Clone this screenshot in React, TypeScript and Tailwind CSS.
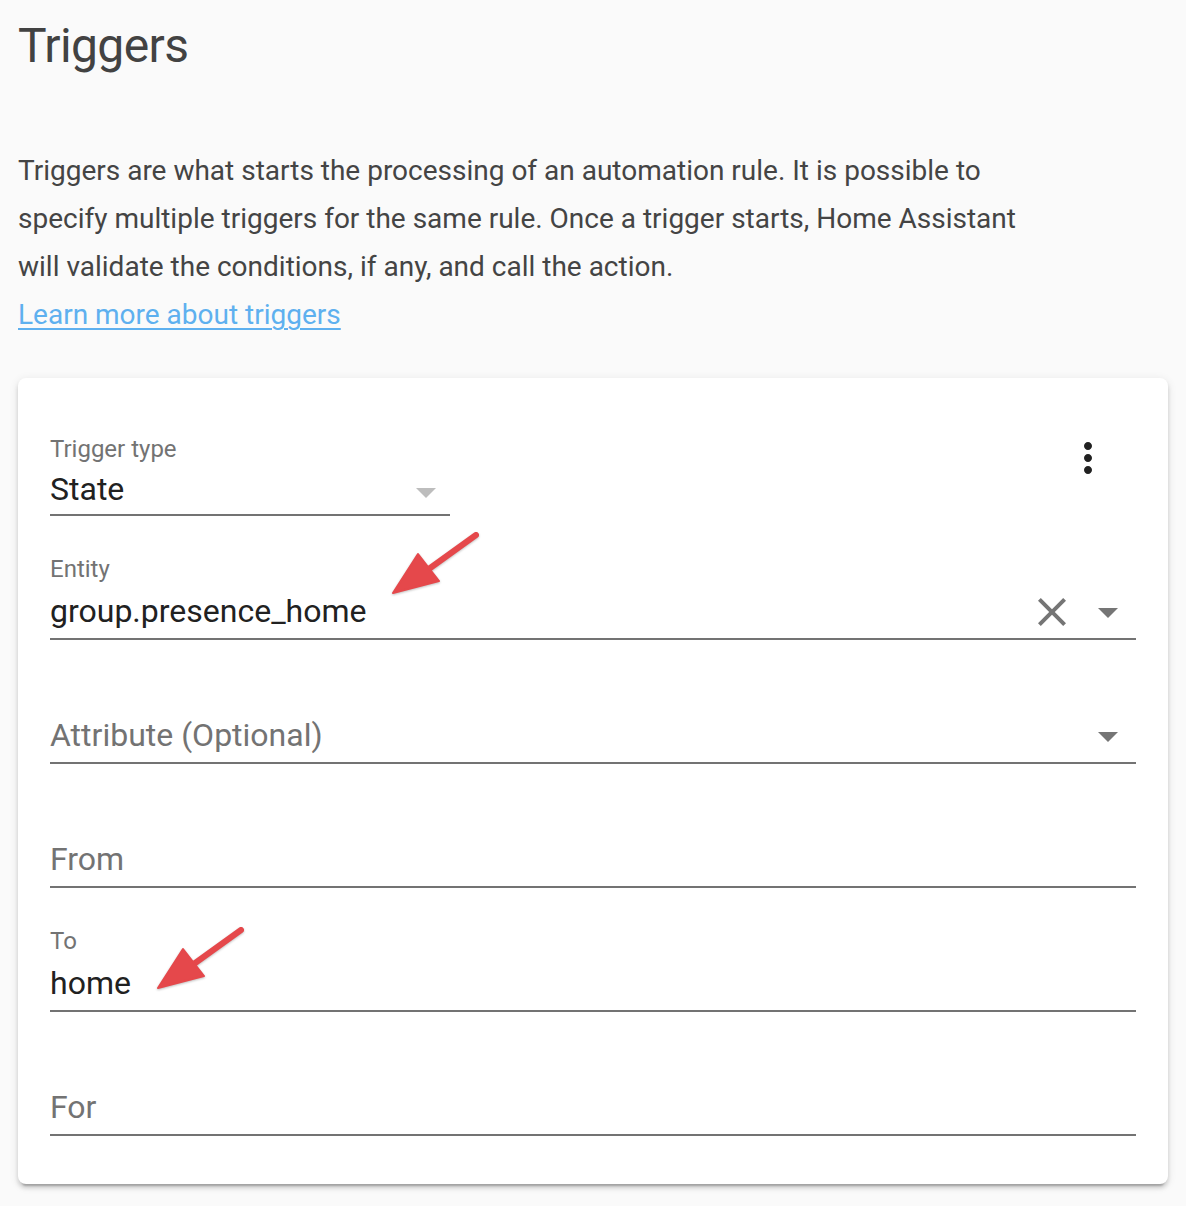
import type { ReactNode } from "react";

function ArrowDropIcon({ color = "#757575" }: { color?: string }) {
  return (
    <svg viewBox="0 0 24 24" className="w-[48px] h-[48px] shrink-0" fill={color}>
      <path d="M7 10l5 5 5-5z" />
    </svg>
  );
}

function CloseIcon() {
  return (
    <svg viewBox="0 0 24 24" className="w-[48px] h-[48px] shrink-0" fill="#757575">
      <path d="M19 6.41L17.59 5 12 10.59 6.41 5 5 6.41 10.59 12 5 17.59 6.41 19 12 13.41 17.59 19 19 17.59 13.41 12z" />
    </svg>
  );
}

function MoreVertIcon() {
  return (
    <svg viewBox="0 0 24 24" className="w-[48px] h-[48px]" fill="#212121">
      <path d="M12 8c1.1 0 2-.9 2-2s-.9-2-2-2-2 .9-2 2 .9 2 2 2zm0 2c-1.1 0-2 .9-2 2s.9 2 2 2 2-.9 2-2-.9-2-2-2zm0 6c-1.1 0-2 .9-2 2s.9 2 2 2 2-.9 2-2-.9-2-2-2z" />
    </svg>
  );
}

type FieldProps = {
  label?: string;
  value?: string;
  placeholder?: string;
  icons?: ReactNode;
  className?: string;
};

function Field({ label, value, placeholder, icons, className = "" }: FieldProps) {
  return (
    <div className={`h-[124px] flex flex-col justify-end ${className}`}>
      {label && <div className="text-[24px] leading-[32px] text-[#737373] mb-[6px]">{label}</div>}
      <div className="flex items-start justify-between h-[40px] box-content pb-[7px]">
        {value ? (
          <span className="text-[32px] leading-[40px] text-[#212121]">{value}</span>
        ) : (
          <span className="text-[32px] leading-[40px] text-[#737373]">{placeholder}</span>
        )}
        {icons && <div className="flex items-start gap-[8px] -mt-[3px] pr-[4px]">{icons}</div>}
      </div>
      <div className="h-[2px] bg-[#737373]" />
    </div>
  );
}

// red callout arrows drawn over the card
function CalloutArrow({ className }: { className: string }) {
  return (
    <svg viewBox="0 0 100 72" className={`absolute w-[100px] h-[72px] ${className}`}>
      <g style={{ filter: "drop-shadow(0 1px 1px rgba(0,0,0,0.25))" }}>
        <line x1="88" y1="6" x2="38" y2="42" stroke="#e5484b" strokeWidth="6" strokeLinecap="round" />
        <polygon points="5,64 30,25 51,52" fill="#e5484b" stroke="#e5484b" strokeWidth="2" strokeLinejoin="round" />
      </g>
    </svg>
  );
}

export default function App() {
  return (
    <div className="min-h-screen bg-[#fafafa] px-[18px] pt-[18px] pb-[22px] font-['Roboto','Noto_Sans',sans-serif]">
      <h1 className="text-[48px] leading-[56px] font-normal tracking-[-0.6px] text-[#424242]">Triggers</h1>

      <p className="mt-[73px] max-w-[1024px] text-[28px] leading-[48px] text-[#444444]">
        Triggers are what starts the processing of an automation rule. It is possible to specify multiple
        triggers for the same rule. Once a trigger starts, Home Assistant will validate the conditions, if any,
        and call the action.
        <br />
        <a href="#" className="text-[#5eb0ef] underline decoration-[2px] underline-offset-[4px]">
          Learn more about triggers
        </a>
      </p>

      <div className="relative mt-[39px] bg-white rounded-[8px] px-[32px] pt-[14px] pb-[48px] shadow-[0_4px_4px_0_rgba(0,0,0,0.14),0_2px_10px_0_rgba(0,0,0,0.10),0_6px_2px_-4px_rgba(0,0,0,0.2)]">
        <div className="flex items-start justify-between">
          <div className="w-[400px] h-[124px] flex flex-col justify-end">
            <div className="text-[24px] leading-[32px] text-[#737373] mb-[3px]">Trigger type</div>
            <div className="flex items-start justify-between h-[40px] box-content pb-[6px]">
              <span className="text-[32px] leading-[40px] text-[#212121] translate-y-[1px]">State</span>
              <ArrowDropIcon color="#bdbdbd" />
            </div>
            <div className="h-[2px] bg-[#737373]" />
          </div>
          <button className="mt-[26px] mr-[8px] w-[80px] h-[80px] flex items-center justify-center rounded-full">
            <MoreVertIcon />
          </button>
        </div>

        <Field
          label="Entity"
          value="group.presence_home"
          icons={
            <>
              <CloseIcon />
              <ArrowDropIcon />
            </>
          }
        />
        <Field placeholder="Attribute (Optional)" icons={<ArrowDropIcon />} />
        <Field placeholder="From" />
        <Field label="To" value="home" />
        <Field placeholder="For" />

        <CalloutArrow className="left-[370px] top-[151px]" />
        <CalloutArrow className="left-[135px] top-[546px]" />
      </div>
    </div>
  );
}
